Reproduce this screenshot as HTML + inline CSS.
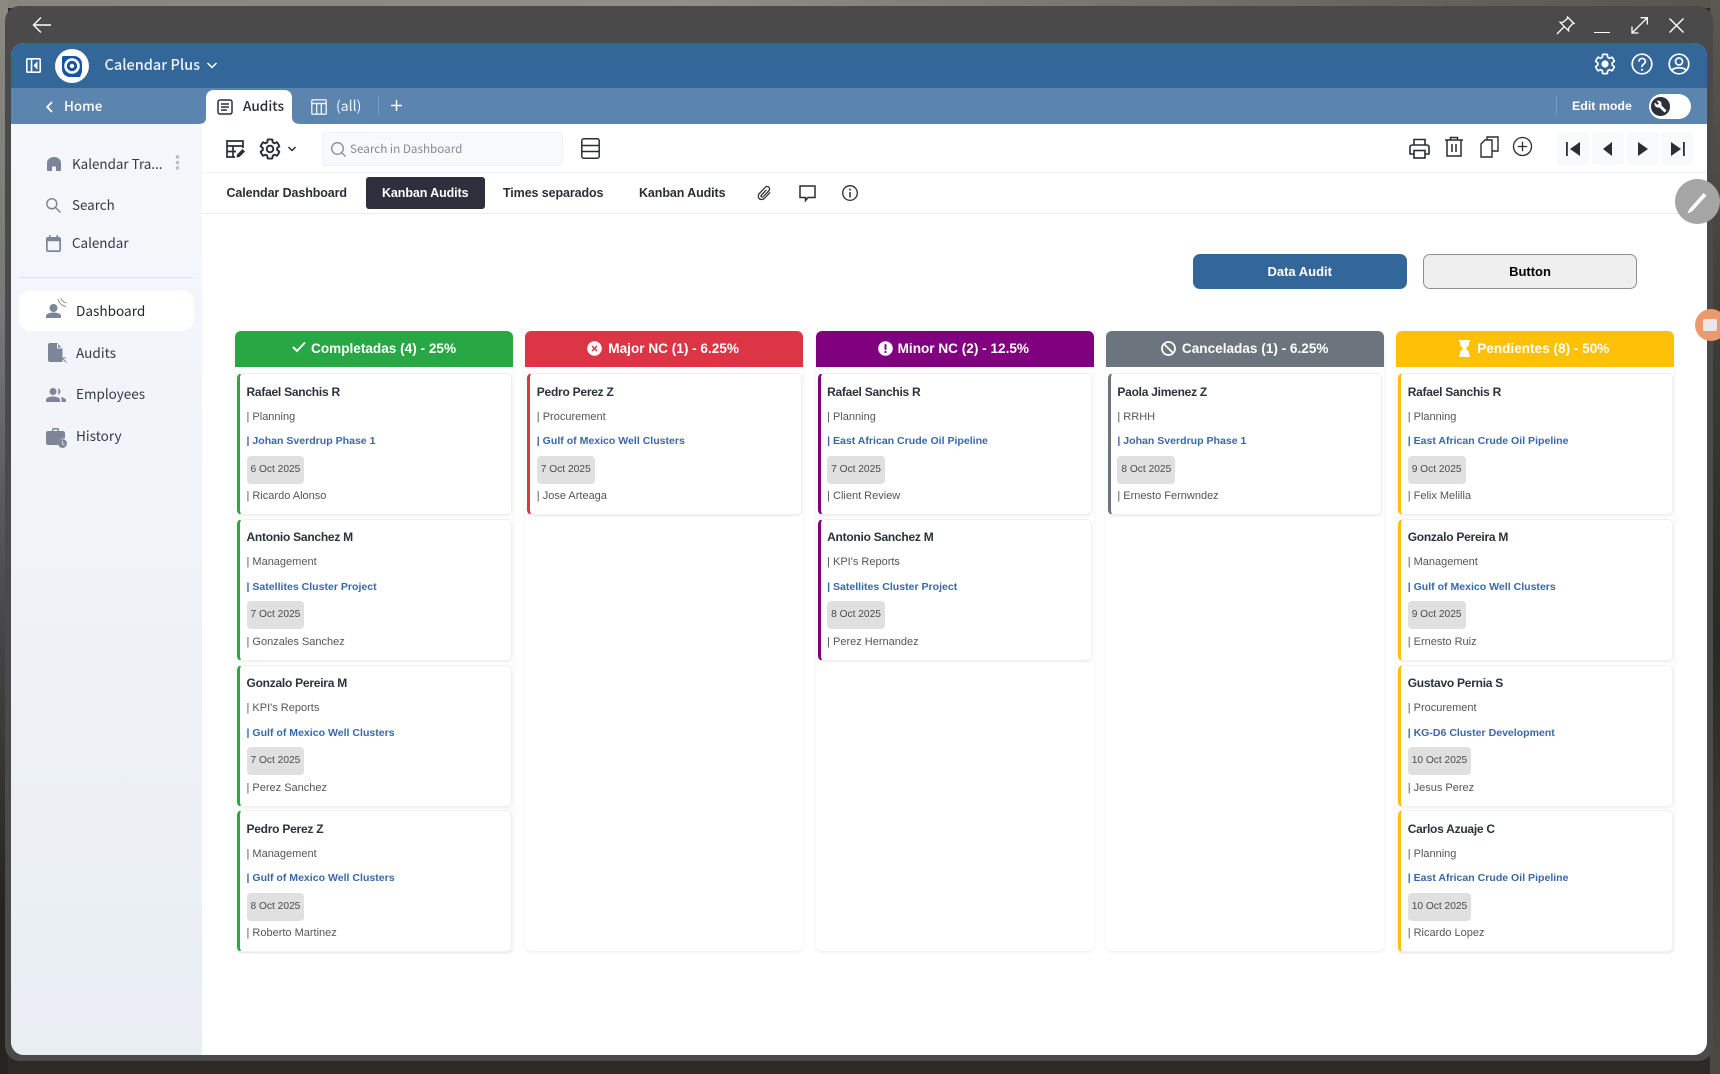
<!DOCTYPE html>
<html><head><meta charset="utf-8"><title>Kanban Audits</title>
<style>
*{box-sizing:border-box}
html,body{margin:0;padding:0}
body{width:1720px;height:1074px;position:relative;overflow:hidden;background:#2b2a26;font-family:"Liberation Sans",sans-serif}
.a{position:absolute}
.t{position:absolute;white-space:nowrap;line-height:20px}
.n{font-family:"Noto Sans CJK JP","Liberation Sans",sans-serif}
svg{position:absolute;display:block;overflow:visible}
.col{position:absolute;top:330.5px;width:278px;height:620.5px;background:#fff;border-radius:6px;box-shadow:0 1px 3px rgba(0,0,0,.08)}
.h{height:36.5px;border-radius:6px 6px 0 0;color:#fff;font-weight:700;font-size:13.6px;line-height:35px;text-align:center;position:relative}
.h span{position:absolute;top:0;white-space:nowrap}
.c{position:absolute;left:2px;width:274.5px;height:142px;background:#fff;border:1px solid #eff0f2;border-left:3px solid #28a745;border-radius:5px;box-shadow:0 1px 2px rgba(0,0,0,.08)}
.c div{position:absolute;left:6.5px;white-space:nowrap;line-height:16px;font-size:11px;color:#555}
.c .x{top:9.5px;font-size:12px;letter-spacing:-.25px;font-weight:700;color:#2a323b}
.c .s{top:34.5px}
.c .p{top:59px;font-weight:700;color:#3a68a6;font-size:10.55px}
.c .d{top:81.5px;height:28px;line-height:28px;padding:0 4px;background:#e0e0e0;border-radius:4px;font-size:10.2px;color:#4a4a4a}
.c .l{top:114px}
</style></head><body>
<div class="a" style="left:0;top:0;width:1720px;height:8px;background:linear-gradient(90deg,#85857c,#8f8f86 40%,#66665c 80%,#55554c)"></div>
<div class="a" style="left:0;top:0;width:8px;height:1074px;background:linear-gradient(180deg,#8a8a80 0,#777 30%,#444 60%,#25241f 85%)"></div>
<div class="a" style="left:1710px;top:0;width:10px;height:1074px;background:linear-gradient(180deg,#5a5a50 0,#3a3a34 35%,#2a2a25 60%,#4c4a40 100%)"></div>
<div class="a" style="left:5px;top:6px;width:1708px;height:1055px;background:#4a4a4b;border-radius:15px"></div>
<div class="a" style="left:11px;top:43px;width:1696px;height:1012px;background:#fff;border-radius:13px;overflow:hidden">
<div class="a" style="left:0;top:0;width:1696px;height:45px;background:#336699"></div>
<div class="a" style="left:0;top:45px;width:1696px;height:36px;background:#5b84ae"></div>
<div class="a" style="left:0;top:81px;width:191px;height:931px;background:linear-gradient(180deg,#f5f7fb,#e9eef3)"></div>
<div class="a" style="left:191px;top:129px;width:1505px;height:1px;background:#f0f1f3"></div>
<div class="a" style="left:191px;top:170px;width:1505px;height:1px;background:#ebedef"></div>
</div>
<!-- title bar icons -->
<svg style="left:33px;top:16px" width="18" height="18" viewBox="0 0 18 18" fill="none" stroke="#fff" stroke-width="1.4"><path d="M0.5 9H18M8 1.5L0.5 9L8 16.5"/></svg>
<svg style="left:1555.500px;top:16px" width="19" height="19" viewBox="0 0 19 19" fill="none" stroke="#fff" stroke-width="1.3"><path d="M11.5 1L18 7.5L16.2 7.9L12.5 12.3L12.6 14.8L4.2 6.4L6.7 6.5L11 3ZM8 10.8L1 18"/></svg>
<div class="a" style="left:1594px;top:31.5px;width:15.5px;height:1.6px;background:#fff"></div>
<svg style="left:1630.500px;top:17px" width="17" height="17" viewBox="0 0 17 17" fill="none" stroke="#fff" stroke-width="1.3"><path d="M1 16L16.3 0.7M9.5 0.7H16.3V7.5M1 9.5V16H7.5"/></svg>
<svg style="left:1669px;top:18px" width="15" height="15" viewBox="0 0 15 15" fill="none" stroke="#fff" stroke-width="1.4"><path d="M0.5 0.5L14.5 14.5M14.5 0.5L0.5 14.5"/></svg>
<!-- header -->
<svg style="left:26px;top:58px" width="15" height="15" viewBox="0 0 15 15" fill="none" stroke="#fff" stroke-width="1.6"><rect x=".8" y=".8" width="13.4" height="13.4" rx="1"/><path d="M5.5 1V14"/><path d="M11 4.5L8.2 7.5L11 10.5Z" fill="#fff" stroke-width="1"/></svg>
<div class="a" style="left:55px;top:49px;width:34px;height:34px;border-radius:50%;background:#fff"></div>
<svg style="left:62px;top:55.500px" width="20" height="21" viewBox="0 0 20 21"><path d="M1 0H12C16.500 0 20 3.500 20 8V16L18 21H8C3.500 21 0 17.500 0 13V1Z" fill="#1455a8"/><circle cx="10" cy="10" r="6.500" fill="none" stroke="#fff" stroke-width="2.600"/><circle cx="10" cy="10" r="2.200" fill="#fff"/></svg>
<div class="t n" style="left:104.500px;top:54.500px;font-size:14.500px;font-weight:500;color:#eef3f8">Calendar Plus</div>
<svg style="left:207px;top:62px" width="10" height="7" viewBox="0 0 10 7" fill="none" stroke="#fff" stroke-width="1.500"><path d="M.5 1L5 5.500L9.500 1"/></svg>
<svg style="left:1593px;top:52px" width="24" height="24" viewBox="0 0 24 24" fill="none" stroke="#fff" stroke-width="1.700"><path d="M19.140 12.940c.04-.3.06-.61.06-.94 0-.32-.02-.64-.07-.94l2.030-1.580c.18-.14.23-.41.12-.61l-1.920-3.320c-.12-.22-.37-.29-.59-.22l-2.390.96c-.5-.38-1.030-.7-1.620-.94l-.36-2.540c-.04-.24-.24-.41-.48-.41h-3.840c-.24 0-.43.17-.47.41l-.36 2.540c-.59.24-1.130.57-1.620.94l-2.390-.96c-.22-.08-.47 0-.59.22L2.740 8.870c-.12.21-.08.47.12.61l2.030 1.580c-.05.3-.09.63-.09.94s.02.64.07.94l-2.030 1.580c-.18.14-.23.41-.12.61l1.920 3.320c.12.22.37.29.59.22l2.390-.96c.5.38 1.030.7 1.620.94l.36 2.540c.05.24.24.41.48.41h3.840c.24 0 .44-.17.47-.41l.36-2.540c.59-.24 1.130-.56 1.620-.94l2.390.96c.22.08.47 0 .59-.22l1.920-3.320c.12-.22.07-.47-.12-.61z"/><circle cx="12" cy="12" r="3.600" fill="#fff" stroke="none"/></svg>
<svg style="left:1631px;top:53px" width="22" height="22" viewBox="0 0 22 22" fill="none" stroke="#fff" stroke-width="1.700"><circle cx="11" cy="11" r="9.800"/><path d="M7.800 8.800C7.800 4.300 14.400 4.500 14.400 8.500C14.400 11 11 11 11 14"/><circle cx="11" cy="16.700" r="1.100" fill="#fff" stroke="none"/></svg>
<svg style="left:1668px;top:53px" width="22" height="22" viewBox="0 0 22 22" fill="none" stroke="#fff" stroke-width="1.700"><circle cx="11" cy="11" r="9.800"/><circle cx="11" cy="8.500" r="3.500"/><path d="M3.800 17.500C6 13.800 16 13.800 18.200 17.500"/></svg>
<!-- tab bar -->
<svg style="left:46px;top:100.500px" width="7" height="12" viewBox="0 0 7 12" fill="none" stroke="#fff" stroke-width="1.800"><path d="M6 1L1.200 6L6 11"/></svg>
<div class="t n" style="left:64px;top:94.500px;font-size:13.400px;font-weight:500;color:#fff">Home</div>
<svg style="left:198px;top:90px" width="106" height="34" viewBox="0 0 106 34"><path d="M0 34C6 34 8 32 8 27V8C8 3 11 0 16 0H86C91 0 94 3 94 8V27C94 32 97 34 103 34Z" fill="#fff"/></svg>
<svg style="left:217px;top:98.500px" width="16" height="16" viewBox="0 0 16 16" fill="none" stroke="#2b2e38" stroke-width="1.500"><rect x="1" y="1" width="14" height="14" rx="2"/><path d="M4 5H12M4 8H12M4 11H10"/></svg>
<div class="t n" style="left:243px;top:95px;font-size:13.600px;font-weight:500;color:#2b2e38">Audits</div>
<svg style="left:311px;top:98.500px" width="16" height="16" viewBox="0 0 16 16" fill="none" stroke="#e9eff5" stroke-width="1.400"><rect x=".8" y=".8" width="14.400" height="14.400" rx="1"/><path d="M1 4.500H15M5.700 4.500V15M10.300 4.500V15"/></svg>
<div class="t n" style="left:336px;top:96px;font-size:14px;color:#f2f5f9">(all)</div>
<div class="a" style="left:377.500px;top:96px;width:1px;height:20px;background:#7c9cbe"></div>
<svg style="left:391px;top:100px" width="11" height="11" viewBox="0 0 11 11" stroke="#fff" stroke-width="1.500"><path d="M5.500 0V11M0 5.500H11"/></svg>
<div class="a" style="left:1555.500px;top:96px;width:1px;height:20px;background:#7c9cbe"></div>
<div class="t" style="left:1572px;top:96px;font-size:12.400px;font-weight:700;color:#fff">Edit mode</div>
<div class="a" style="left:1648.500px;top:94px;width:42.500px;height:24.500px;background:#fff;border-radius:13px"></div>
<div class="a" style="left:1651px;top:97px;width:18.500px;height:18.500px;background:#2c2f3c;border-radius:50%"></div>
<svg style="left:1654px;top:100px" width="13" height="13" viewBox="0 0 24 24"><path fill="#fff" d="M22.700 19l-9.100-9.100c.9-2.300.4-5-1.500-6.900-2-2-5-2.400-7.400-1.300L9 6 6 9 1.600 4.700C.4 7.100.9 10.100 2.900 12.100c1.900 1.900 4.600 2.400 6.900 1.500l9.100 9.100c.4.4 1 .4 1.400 0l2.300-2.300c.5-.4.5-1.100.1-1.400z"/></svg>
<!-- toolbar left -->
<svg style="left:226px;top:140px" width="20" height="19" viewBox="0 0 20 19" fill="none" stroke="#2a2d35" stroke-width="1.700"><path d="M9 17H1V1H17V8M1 6H17M7 6V17M1 11.500H10"/><path d="M10.500 17.500L11 14.500L16.500 9L19 11.500L13.500 17Z" fill="#2a2d35" stroke="none"/></svg>
<svg style="left:258px;top:136.500px" width="24" height="24" viewBox="0 0 24 24" fill="none" stroke="#2a2d35" stroke-width="1.900"><path d="M19.140 12.940c.04-.3.06-.61.06-.94 0-.32-.02-.64-.07-.94l2.030-1.580c.18-.14.23-.41.12-.61l-1.920-3.320c-.12-.22-.37-.29-.59-.22l-2.390.96c-.5-.38-1.030-.7-1.620-.94l-.36-2.540c-.04-.24-.24-.41-.48-.41h-3.840c-.24 0-.43.17-.47.41l-.36 2.540c-.59.24-1.130.57-1.620.94l-2.390-.96c-.22-.08-.47 0-.59.22L2.740 8.870c-.12.21-.08.47.12.61l2.030 1.580c-.05.3-.09.63-.09.94s.02.64.07.94l-2.030 1.580c-.18.14-.23.41-.12.61l1.920 3.320c.12.22.37.29.59.22l2.390-.96c.5.38 1.030.7 1.620.94l.36 2.540c.05.24.24.41.48.41h3.840c.24 0 .44-.17.47-.41l.36-2.540c.59-.24 1.130-.56 1.620-.94l2.390.96c.22.08.47 0 .59-.22l1.920-3.320c.12-.22.07-.47-.12-.61z"/><circle cx="12" cy="12" r="3.300"/></svg>
<svg style="left:288px;top:146px" width="8" height="6" viewBox="0 0 8 6" fill="none" stroke="#2a2d35" stroke-width="1.500"><path d="M.5 1L4 4.500L7.500 1"/></svg>
<div class="a" style="left:322px;top:132px;width:241px;height:34px;background:#f8f9fb;border:1px solid #eff1f4;border-radius:4px"></div>
<svg style="left:331px;top:142px" width="15" height="15" viewBox="0 0 15 15" fill="none" stroke="#858b93" stroke-width="1.300"><circle cx="6.500" cy="6.500" r="5.800"/><path d="M10.800 10.800L14.500 14.500"/></svg>
<div class="t n" style="left:350px;top:138.500px;font-size:11.700px;color:#858b93">Search in Dashboard</div>
<svg style="left:581px;top:138px" width="19" height="21" viewBox="0 0 19 21" fill="none" stroke="#2a2d35" stroke-width="1.500"><rect x=".8" y=".8" width="17.400" height="19.400" rx="2"/><path d="M1 7.500H18M1 13.500H18"/></svg>
<!-- toolbar right -->
<svg style="left:1409px;top:138px" width="21" height="21" viewBox="0 0 21 21" fill="none" stroke="#2a2d35" stroke-width="1.600"><path d="M5 7V1.500H16V7M5 16H1V9C1 8 2 7 3 7H18C19 7 20 8 20 9V16H16"/><rect x="5" y="12.500" width="11" height="7.500"/></svg>
<svg style="left:1445px;top:136px" width="18" height="21" viewBox="0 0 18 21" fill="none" stroke="#2a2d35" stroke-width="1.500"><path d="M0 4H18M5.500 4V1.500H12.500V4M2 4V20H16V4M7 8V16M11 8V16"/></svg>
<svg style="left:1479.500px;top:136px" width="19" height="22" viewBox="0 0 19 22" fill="none" stroke="#2a2d35" stroke-width="1.400"><path d="M1 8L5 4H12V21H1Z"/><path d="M7 4V1H13L18 1V15H12"/></svg>
<svg style="left:1513px;top:137px" width="19" height="19" viewBox="0 0 19 19" fill="none" stroke="#2a2d35" stroke-width="1.300"><circle cx="9.500" cy="9.500" r="9"/><path d="M9.500 4.800V14.200M4.800 9.500H14.200"/></svg>
<div class="a" style="left:1557px;top:132px;width:32px;height:33px;background:#f8f9fb;border-radius:4px"></div>
<div class="a" style="left:1591.500px;top:132px;width:32px;height:33px;background:#f8f9fb;border-radius:4px"></div>
<div class="a" style="left:1626.500px;top:132px;width:32px;height:33px;background:#f8f9fb;border-radius:4px"></div>
<div class="a" style="left:1661px;top:132px;width:32px;height:33px;background:#f8f9fb;border-radius:4px"></div>
<svg style="left:1566px;top:142px" width="14" height="14" viewBox="0 0 14 14" fill="#2a2d35"><rect x="0" y="0" width="1.800" height="14"/><path d="M14 0V14L4 7Z"/></svg>
<svg style="left:1603px;top:142px" width="10" height="14" viewBox="0 0 10 14" fill="#2a2d35"><path d="M9 0V14L0 7Z"/></svg>
<svg style="left:1637.500px;top:142px" width="10" height="14" viewBox="0 0 10 14" fill="#2a2d35"><path d="M0 0V14L10 7Z"/></svg>
<svg style="left:1671px;top:142px" width="14" height="14" viewBox="0 0 14 14" fill="#2a2d35"><rect x="12" y="0" width="1.800" height="14"/><path d="M0 0V14L10 7Z"/></svg>
<!-- tabs row -->
<div class="t" style="left:226.500px;top:183px;font-size:12.500px;font-weight:700;color:#2b2e38;letter-spacing:-.1px">Calendar Dashboard</div>
<div class="a" style="left:366px;top:177px;width:118.500px;height:32px;background:#2d2f3d;border-radius:3px"></div>
<div class="t" style="left:382px;top:183px;font-size:12.500px;font-weight:700;color:#fff;letter-spacing:-.1px">Kanban Audits</div>
<div class="t" style="left:503px;top:183px;font-size:12.500px;font-weight:700;color:#2b2e38;letter-spacing:-.1px">Times separados</div>
<div class="t" style="left:639px;top:183px;font-size:12.500px;font-weight:700;color:#2b2e38;letter-spacing:-.1px">Kanban Audits</div>
<svg style="left:757px;top:185px" width="15" height="16" viewBox="0 0 24 24" fill="none" stroke="#2a2d35" stroke-width="2"><path d="M21 11L12 20.500C9.500 23 5.500 23 3.500 21C1.500 19 1.500 15 4 12.500L13 3C14.800 1.200 17.500 1.200 19 2.800C20.500 4.300 20.500 7 18.700 8.800L10 17.800C9 18.800 7.700 18.800 7 18C6.300 17.300 6.300 16 7.300 15L15 7"/></svg>
<svg style="left:799px;top:185px" width="17" height="17" viewBox="0 0 17 17" fill="none" stroke="#2a2d35" stroke-width="1.500"><path d="M1 1H16V12.500H9L6.500 15.500V12.500H1Z"/></svg>
<svg style="left:842px;top:185px" width="16" height="16" viewBox="0 0 16 16" fill="none" stroke="#2a2d35" stroke-width="1.300"><circle cx="8" cy="8" r="7.300"/><path d="M8 7V12.500" stroke-width="1.500"/><circle cx="8" cy="4.600" r="1" fill="#2a2d35" stroke="none"/></svg>
<!-- sidebar -->
<svg style="left:47px;top:157px" width="14" height="14" viewBox="0 0 14 14" fill="#7c8698"><path d="M0 14V6C0 2.500 3 0 7 0C11 0 14 2.500 14 6V14H9V9.500H5V14Z"/></svg>
<div class="t n" style="left:72px;top:152.500px;font-size:13.400px;color:#343a45">Kalendar Tra...</div>
<svg style="left:175px;top:155px" width="5" height="15" viewBox="0 0 5 15" fill="#b7bcc4"><circle cx="2.500" cy="2" r="1.700"/><circle cx="2.500" cy="7.500" r="1.700"/><circle cx="2.500" cy="13" r="1.700"/></svg>
<svg style="left:46px;top:197.500px" width="15" height="15" viewBox="0 0 15 15" fill="none" stroke="#7c8698" stroke-width="1.500"><circle cx="5.800" cy="5.800" r="5"/><path d="M9.500 9.500L14.500 14.500"/></svg>
<div class="t n" style="left:72px;top:194px;font-size:13.400px;color:#343a45">Search</div>
<svg style="left:46px;top:235px" width="15" height="17" viewBox="0 0 15 17"><path d="M3 0H4.500V2H10.500V0H12V2H13C14.200 2 15 2.800 15 4V15C15 16.200 14.200 17 13 17H2C.8 17 0 16.200 0 15V4C0 2.800.8 2 2 2H3Z" fill="#7c8698"/><rect x="1.700" y="6.200" width="11.600" height="9.100" fill="#f4f6fa"/></svg>
<div class="t n" style="left:72px;top:232px;font-size:13.400px;color:#343a45">Calendar</div>
<div class="a" style="left:19px;top:277px;width:175px;height:1px;background:#dfe3e9"></div>
<div class="a" style="left:19px;top:290px;width:175px;height:41px;background:#fff;border-radius:12px"></div>
<svg style="left:46px;top:298px" width="21" height="20" viewBox="0 0 21 20"><circle cx="7.500" cy="10" r="4" fill="#7c8698"/><path d="M0 20V18C0 15.500 4 14.500 7.500 14.500C11 14.500 15 15.500 15 18V20Z" fill="#7c8698"/><path d="M12 1C13 5 15 7.500 20 8.500M15 .5C16 3 17.500 4.500 20.500 5" fill="none" stroke="#7c8698" stroke-width="1"/></svg>
<div class="t n" style="left:76px;top:300px;font-size:13.600px;color:#23272f">Dashboard</div>
<svg style="left:48px;top:342.500px" width="19" height="20" viewBox="0 0 19 20"><path d="M2 0H9L14.500 5.500V19H2C.9 19 0 18.100 0 17V2C0 .9.900 0 2 0Z" fill="#7c8698"/><path d="M9.500 1V5H14" fill="none" stroke="#f4f6fa" stroke-width="1"/><path d="M14 15H18M14 15V19M14.200 15.200L18.500 19.500" fill="none" stroke="#7c8698" stroke-width="1"/></svg>
<div class="t n" style="left:76px;top:342px;font-size:13.600px;color:#343a45">Audits</div>
<svg style="left:46px;top:387.500px" width="20" height="14" viewBox="0 0 20 14" fill="#7c8698"><circle cx="7" cy="3.500" r="3.500"/><path d="M0 14V12C0 9.500 3.500 8.500 7 8.500C10.500 8.500 14 9.500 14 12V14Z"/><path d="M11.500 .5C13.500 .8 14.500 2 14.500 3.500C14.500 5 13.500 6.200 11.500 6.500C12.800 5 12.800 2 11.500 .5ZM15 9C17.500 9.500 20 10.500 20 12.500V14H15.500V12C15.500 10.800 15.500 10 15 9Z"/></svg>
<div class="t n" style="left:76px;top:382.500px;font-size:13.500px;color:#343a45">Employees</div>
<svg style="left:46px;top:427.500px" width="21" height="20" viewBox="0 0 21 20"><path d="M6 3V1.500C6 .7 6.700 0 7.500 0H11.500C12.300 0 13 .7 13 1.500V3H17C18 3 19 3.800 19 5V10.500C15 9.800 12 12.500 11.800 17H2C.9 17 0 16 0 15V5C0 3.800 1 3 2 3ZM7.500 3H11.500V1.500H7.500Z" fill="#7c8698" fill-rule="evenodd"/><circle cx="16.500" cy="15.500" r="4.500" fill="#7c8698"/><path d="M16.500 13V16L18.500 17" fill="none" stroke="#e9eef3" stroke-width=".9"/></svg>
<div class="t n" style="left:76px;top:425px;font-size:13.600px;color:#343a45">History</div>
<!-- floaters -->
<div class="a" style="left:1675px;top:179px;width:45px;height:45px;border-radius:50%;background:#a5a5a5"></div>
<svg style="left:1687px;top:191px" width="21" height="23" viewBox="0 0 21 23"><path d="M.5 22.500L2 18.500L16.500 2L19.500 4.500L5 20.500Z" fill="#fff"/></svg>
<div class="a" style="left:1695px;top:309px;width:32px;height:32px;border-radius:50%;background:#ec9a6c"></div>
<div class="a" style="left:1703px;top:319px;width:14px;height:12px;background:#e9e6e3;border-radius:2px"></div>
<!-- buttons -->
<div class="a" style="left:1193px;top:254px;width:213.500px;height:35px;background:#336699;border-radius:7px;color:#fff;font-weight:700;font-size:13px;line-height:36px;text-align:center">Data Audit</div>
<div class="a" style="left:1423px;top:254px;width:214px;height:35px;background:#efefef;border:1px solid #8f8f8f;border-radius:7px;color:#000;font-weight:700;font-size:13px;line-height:34px;text-align:center">Button</div>

<!-- Column 1 -->
<div class="col" style="left:235px">
<div class="h" style="background:#28a745"><span style="left:76px">Completadas (4) - 25%</span></div>
<svg style="left:57px;top:10.500px" width="14" height="12" viewBox="0 0 14 12" fill="none" stroke="#fff" stroke-width="2"><path d="M1 6L5 10L13 1.500"/></svg>
<div class="c" style="top:42.500px"><div class="x">Rafael Sanchis R</div><div class="s">| Planning</div><div class="p">| Johan Sverdrup Phase 1</div><div class="d">6 Oct 2025</div><div class="l">| Ricardo Alonso</div></div>
<div class="c" style="top:188px"><div class="x">Antonio Sanchez M</div><div class="s">| Management</div><div class="p">| Satellites Cluster Project</div><div class="d">7 Oct 2025</div><div class="l">| Gonzales Sanchez</div></div>
<div class="c" style="top:334px"><div class="x">Gonzalo Pereira M</div><div class="s">| KPI's Reports</div><div class="p">| Gulf of Mexico Well Clusters</div><div class="d">7 Oct 2025</div><div class="l">| Perez Sanchez</div></div>
<div class="c" style="top:479.500px"><div class="x">Pedro Perez Z</div><div class="s">| Management</div><div class="p">| Gulf of Mexico Well Clusters</div><div class="d">8 Oct 2025</div><div class="l">| Roberto Martinez</div></div>
</div>
<!-- Column 2 -->
<div class="col" style="left:525.300px">
<div class="h" style="background:#dc3545"><span style="left:83px">Major NC (1) - 6.25%</span></div>
<svg style="left:62px;top:10.500px" width="15" height="15" viewBox="0 0 15 15"><circle cx="7.500" cy="7.500" r="7.300" fill="#fff"/><path d="M5 5L10 10M10 5L5 10" stroke="#dc3545" stroke-width="1.500"/></svg>
<div class="c" style="top:42.500px;border-left-color:#dc3545"><div class="x">Pedro Perez Z</div><div class="s">| Procurement</div><div class="p">| Gulf of Mexico Well Clusters</div><div class="d">7 Oct 2025</div><div class="l">| Jose Arteaga</div></div>
</div>
<!-- Column 3 -->
<div class="col" style="left:815.600px">
<div class="h" style="background:#800080"><span style="left:82px">Minor NC (2) - 12.5%</span></div>
<svg style="left:62px;top:10.500px" width="15" height="15" viewBox="0 0 15 15"><circle cx="7.500" cy="7.500" r="7.300" fill="#fff"/><rect x="6.500" y="3" width="2" height="6" rx="1" fill="#800080"/><circle cx="7.500" cy="11" r="1.100" fill="#800080"/></svg>
<div class="c" style="top:42.500px;border-left-color:#800080"><div class="x">Rafael Sanchis R</div><div class="s">| Planning</div><div class="p">| East African Crude Oil Pipeline</div><div class="d">7 Oct 2025</div><div class="l">| Client Review</div></div>
<div class="c" style="top:188px;border-left-color:#800080"><div class="x">Antonio Sanchez M</div><div class="s">| KPI's Reports</div><div class="p">| Satellites Cluster Project</div><div class="d">8 Oct 2025</div><div class="l">| Perez Hernandez</div></div>
</div>
<!-- Column 4 -->
<div class="col" style="left:1105.900px">
<div class="h" style="background:#6c757d"><span style="left:76px">Canceladas (1) - 6.25%</span></div>
<svg style="left:55px;top:10.500px" width="15" height="15" viewBox="0 0 15 15" fill="none" stroke="#fff" stroke-width="1.800"><circle cx="7.500" cy="7.500" r="6.500"/><path d="M3 3L12 12"/></svg>
<div class="c" style="top:42.500px;border-left-color:#6c757d"><div class="x">Paola Jimenez Z</div><div class="s">| RRHH</div><div class="p">| Johan Sverdrup Phase 1</div><div class="d">8 Oct 2025</div><div class="l">| Ernesto Fernwndez</div></div>
</div>
<!-- Column 5 -->
<div class="col" style="left:1396.200px">
<div class="h" style="background:#ffc107"><span style="left:81px">Pendientes (8) - 50%</span></div>
<svg style="left:63px;top:9.500px" width="11" height="17" viewBox="0 0 11 17" fill="#fff"><path d="M0 0H11V2H10V4.500C10 6.500 7 7.500 7 8.500C7 9.500 10 10.500 10 12.500V15H11V17H0V15H1V12.500C1 10.500 4 9.500 4 8.500C4 7.500 1 6.500 1 4.500V2H0Z"/></svg>
<div class="c" style="top:42.500px;border-left-color:#ffc107"><div class="x">Rafael Sanchis R</div><div class="s">| Planning</div><div class="p">| East African Crude Oil Pipeline</div><div class="d">9 Oct 2025</div><div class="l">| Felix Melilla</div></div>
<div class="c" style="top:188px;border-left-color:#ffc107"><div class="x">Gonzalo Pereira M</div><div class="s">| Management</div><div class="p">| Gulf of Mexico Well Clusters</div><div class="d">9 Oct 2025</div><div class="l">| Ernesto Ruiz</div></div>
<div class="c" style="top:334px;border-left-color:#ffc107"><div class="x">Gustavo Pernia S</div><div class="s">| Procurement</div><div class="p">| KG-D6 Cluster Development</div><div class="d">10 Oct 2025</div><div class="l">| Jesus Perez</div></div>
<div class="c" style="top:479.500px;border-left-color:#ffc107"><div class="x">Carlos Azuaje C</div><div class="s">| Planning</div><div class="p">| East African Crude Oil Pipeline</div><div class="d">10 Oct 2025</div><div class="l">| Ricardo Lopez</div></div>
</div>
</body></html>
